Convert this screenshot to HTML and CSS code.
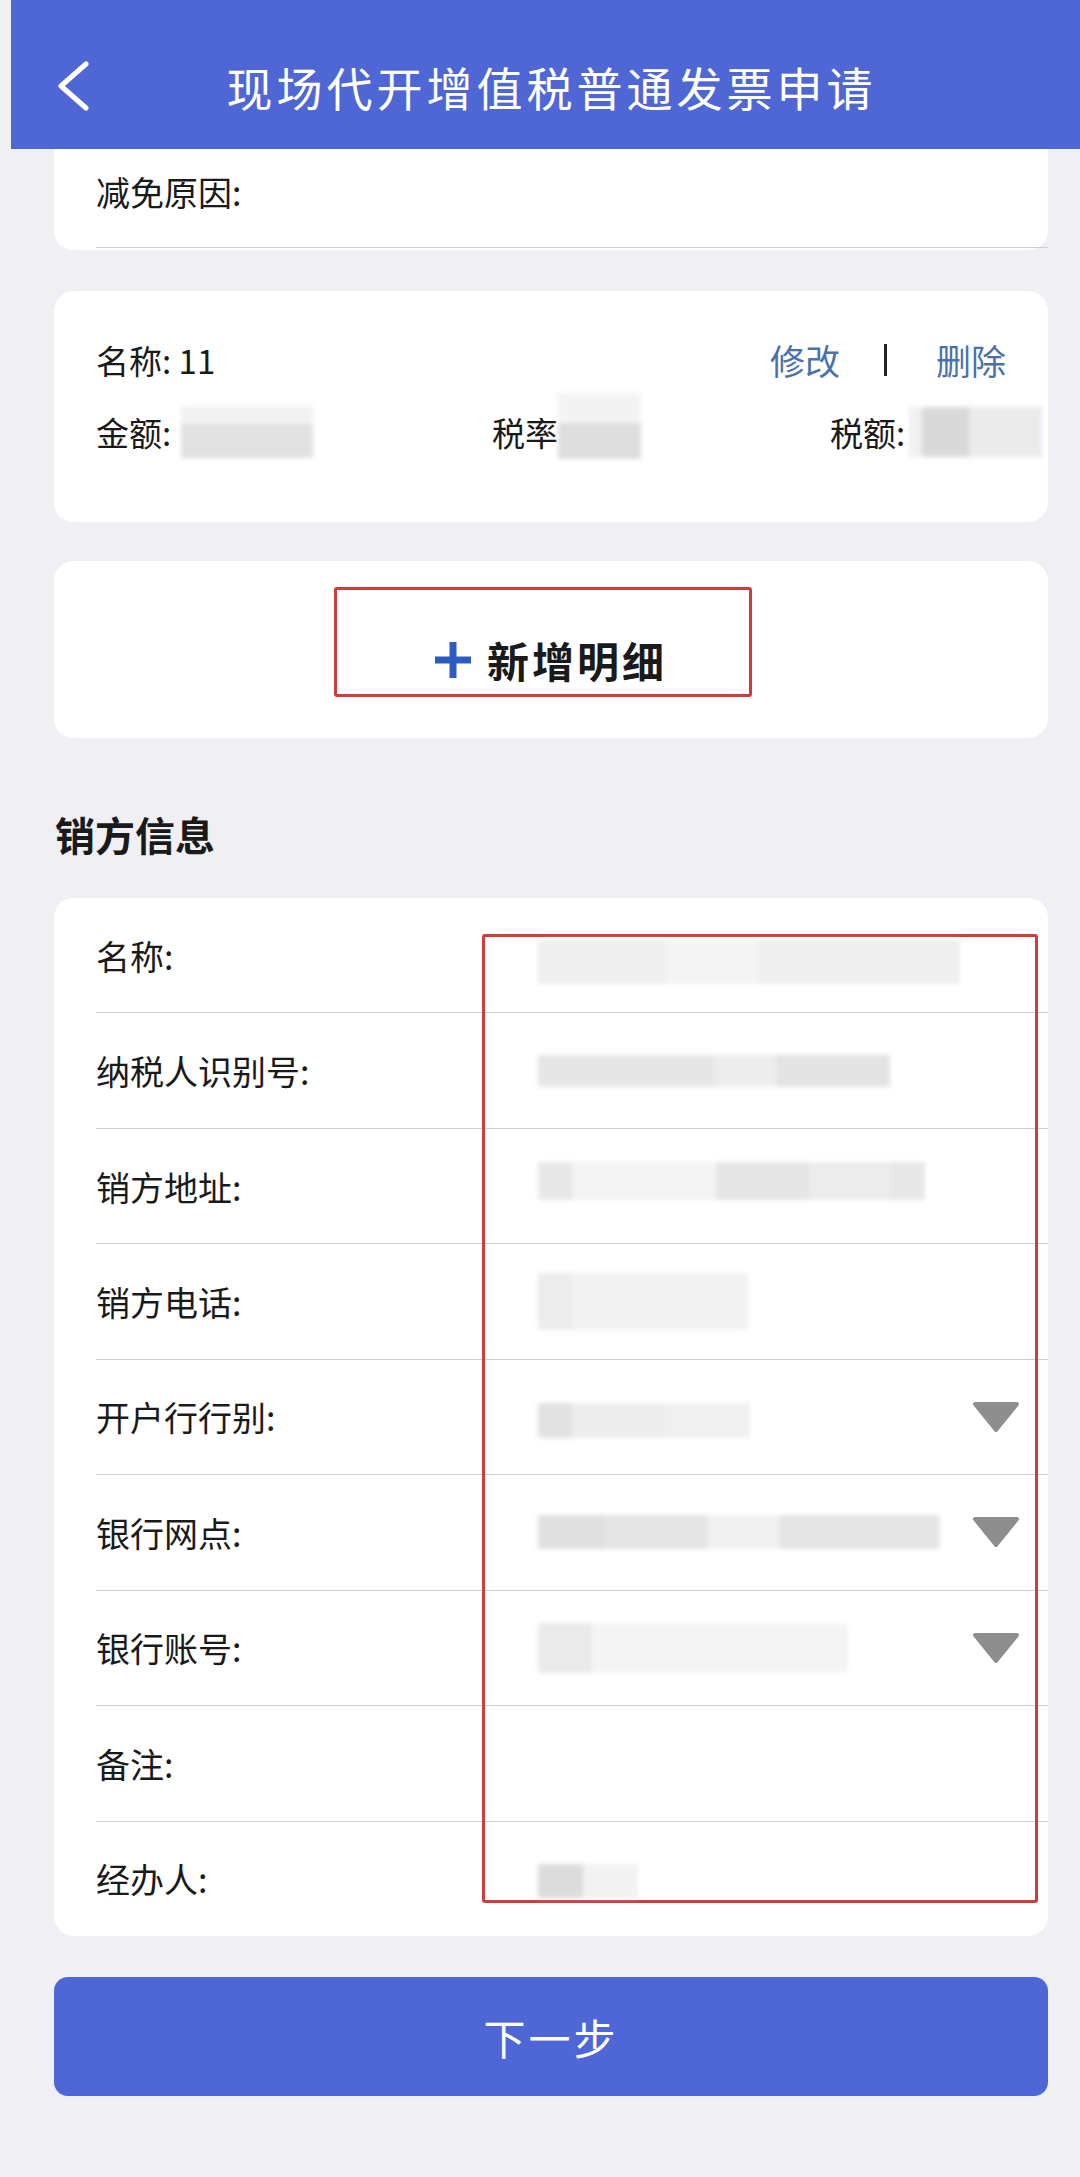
FILE: index.html
```html
<!DOCTYPE html>
<html>

<head>
    <meta charset="utf-8">
    <title>现场代开增值税普通发票申请</title>
    <link rel="stylesheet" href="styles.css">
</head>

<body>
    <div class="page">
        <div class="top-bar">
            <span class="back">
                <svg width="34" height="50" viewBox="0 0 34 50">
                    <polyline points="30,3 5,25 30,47" fill="none" stroke="#ffffff" stroke-width="5"
                        stroke-linecap="round" stroke-linejoin="round" />
                </svg>
            </span>
            <h1>现场代开增值税普通发票申请</h1>
            <span></span>
        </div>

        <!-- tail of the previous card, scrolled under the header -->
        <div class="card card-cut">
            <div class="reason-row">减免原因:</div>
        </div>

        <div class="card item-card">
            <div class="item-head">
                <span>名称: 11</span>
                <div class="actions">
                    <span class="action">修改</span>
                    <span class="divider"></span>
                    <span class="action">删除</span>
                </div>
            </div>
            <div class="item-values">
                <div class="cell">金额: <span class="mosaic m-amount"></span></div>
                <div class="cell">税率<span class="mosaic m-rate"></span></div>
                <div class="cell">税额: <span class="mosaic m-tax"></span></div>
            </div>
        </div>

        <div class="card add-card">
            <div class="mark mark-add"></div>
            <div class="add-btn">
                <svg width="36" height="36" viewBox="0 0 36 36">
                    <rect x="14.5" y="0" width="7" height="36" fill="#2d5cc0" />
                    <rect x="0" y="14.5" width="36" height="7" fill="#2d5cc0" />
                </svg>
                <span>新增明细</span>
            </div>
        </div>

        <h2 class="section-title">销方信息</h2>

        <div class="card seller-card">
            <div class="mark mark-seller"></div>
            <div class="field-row">
                <span class="field-label">名称:</span>
                <span class="mosaic m-name"></span>
            </div>
            <div class="field-row">
                <span class="field-label">纳税人识别号:</span>
                <span class="mosaic m-taxid"></span>
            </div>
            <div class="field-row">
                <span class="field-label">销方地址:</span>
                <span class="mosaic m-addr"></span>
            </div>
            <div class="field-row">
                <span class="field-label">销方电话:</span>
                <span class="mosaic m-phone"></span>
            </div>
            <div class="field-row">
                <span class="field-label">开户行行别:</span>
                <span class="mosaic m-bank-type"></span>
                <svg class="arrow" width="48" height="32" viewBox="0 0 48 32">
                    <polygon points="3,3 45,3 24,29" fill="#8e8e8e" stroke="#8e8e8e" stroke-width="4"
                        stroke-linejoin="round" />
                </svg>
            </div>
            <div class="field-row">
                <span class="field-label">银行网点:</span>
                <span class="mosaic m-branch"></span>
                <svg class="arrow" width="48" height="32" viewBox="0 0 48 32">
                    <polygon points="3,3 45,3 24,29" fill="#8e8e8e" stroke="#8e8e8e" stroke-width="4"
                        stroke-linejoin="round" />
                </svg>
            </div>
            <div class="field-row">
                <span class="field-label">银行账号:</span>
                <span class="mosaic m-account"></span>
                <svg class="arrow" width="48" height="32" viewBox="0 0 48 32">
                    <polygon points="3,3 45,3 24,29" fill="#8e8e8e" stroke="#8e8e8e" stroke-width="4"
                        stroke-linejoin="round" />
                </svg>
            </div>
            <div class="field-row">
                <span class="field-label">备注:</span>
            </div>
            <div class="field-row">
                <span class="field-label">经办人:</span>
                <span class="mosaic m-agent"></span>
            </div>
        </div>

        <div class="next-btn">下一步</div>
    </div>
</body>

</html>
```

FILE: styles.css
```css
body {
    font-family: "Noto Sans CJK SC", "Noto Sans", sans-serif;
    margin: 0;
    padding: 0;
    background: #efeff4;
    color: #1a1a1a;
}

.page {
    padding-left: 11px;
    height: 2177px;
    box-sizing: border-box;
    overflow: hidden;
}

.top-bar {
    background: #4f67d5;
    height: 149px;
    padding-top: 22px;
    box-sizing: border-box;
    display: grid;
    grid-template-columns: 1fr auto 1fr;
    align-items: center;
}

.back {
    padding-left: 45px;
    display: flex;
}

.top-bar h1 {
    margin: 0 0 0 12px;
    color: #ffffff;
    font-size: 46px;
    font-weight: normal;
    line-height: 1;
    letter-spacing: 4px;
}

.card {
    background: #ffffff;
    margin: 0 32px 0 43px;
    border-radius: 20px;
}

.card-cut {
    border-radius: 0 0 20px 20px;
    padding-bottom: 2px;
}

.reason-row {
    margin-left: 42px;
    height: 99px;
    box-sizing: border-box;
    padding-top: 26px;
    font-size: 34px;
    line-height: 34px;
    border-bottom: 1px solid #cfcfcf;
}

.item-card {
    margin-top: 41px;
    height: 231px;
    padding: 52px 42px 0 42px;
    box-sizing: border-box;
    font-size: 33px;
    line-height: 34px;
}

.item-head {
    display: flex;
    justify-content: space-between;
    align-items: center;
}

.actions {
    display: flex;
    align-items: center;
    font-size: 35px;
}

.action {
    color: #4a71ab;
}

.divider {
    width: 3px;
    height: 32px;
    margin: 0 49px 0 44px;
    background: #222222;
}

.item-values {
    margin-top: 38px;
    height: 34px;
    display: grid;
    grid-template-columns: 396px 338px 1fr;
    align-items: center;
}

.cell {
    height: 34px;
    display: flex;
    align-items: center;
    white-space: nowrap;
}

.mosaic {
    display: block;
    flex-shrink: 0;
    background: #ebebeb;
    filter: blur(2px);
}

.m-amount {
    width: 132px;
    height: 52px;
    margin-left: 10px;
    background: linear-gradient(to bottom, #f2f2f2 0 35%, #e1e1e1 35%);
}

.m-rate {
    width: 83px;
    height: 66px;
    margin-top: -12px;
    background: linear-gradient(to bottom, #f3f3f3 0 45%, #dedede 45%);
}

.m-tax {
    width: 133px;
    height: 50px;
    margin-left: 4px;
    background: linear-gradient(to right, #f0f0f0 0 10%, #d9d9d9 10% 45%, #ebebeb 45%);
}

.add-card {
    margin-top: 39px;
    height: 177px;
    padding-top: 20px;
    box-sizing: border-box;
    position: relative;
    display: flex;
    justify-content: center;
    align-items: center;
}

.add-btn {
    display: flex;
    align-items: center;
    gap: 16px;
    font-size: 42px;
    font-weight: bold;
    letter-spacing: 3px;
}

.mark {
    position: absolute;
    border: 3px solid #d23b3b;
    border-radius: 3px;
    box-sizing: border-box;
}

.mark-add {
    left: 280px;
    top: 26px;
    width: 418px;
    height: 110px;
}

.section-title {
    margin: 70px 0 38px 44px;
    font-size: 40px;
    line-height: 52px;
    font-weight: bold;
}

.seller-card {
    height: 1038px;
    position: relative;
    display: flex;
    flex-direction: column;
}

.field-row {
    flex: 1;
    margin-left: 42px;
    display: flex;
    align-items: center;
    border-bottom: 1px solid #d2d2d2;
    font-size: 34px;
}

.field-row:last-of-type {
    border-bottom: none;
}

.field-label {
    width: 442px;
    flex-shrink: 0;
}

.arrow {
    margin-left: auto;
    margin-right: 28px;
}

.m-name {
    width: 422px;
    height: 44px;
    margin-top: 14px;
    background: linear-gradient(to right, #eeeeee 0 30%, #f4f4f4 30% 52%, #efefef 52%);
}

.m-taxid {
    width: 352px;
    height: 32px;
    background: linear-gradient(to right, #e6e6e6 0 50%, #ededed 50% 68%, #e3e3e3 68%);
}

.m-addr {
    width: 387px;
    height: 38px;
    margin-top: -10px;
    background: linear-gradient(to right, #e8e8e8 0 9%, #f4f4f4 9% 46%, #e5e5e5 46% 70%, #ececec 70% 91%, #e8e8e8 91%);
}

.m-phone {
    width: 210px;
    height: 57px;
    background: linear-gradient(to right, #ececec 0 16%, #f2f2f2 16%);
}

.m-bank-type {
    width: 212px;
    height: 35px;
    margin-top: 8px;
    background: linear-gradient(to right, #e2e2e2 0 16%, #ededed 16% 60%, #f0f0f0 60%);
}

.m-branch {
    width: 402px;
    height: 34px;
    background: linear-gradient(to right, #e0e0e0 0 17%, #e5e5e5 17% 42%, #f0f0f0 42% 60%, #e6e6e6 60%);
}

.m-account {
    width: 310px;
    height: 50px;
    background: linear-gradient(to right, #eaeaea 0 17%, #f4f4f4 17%);
}

.m-agent {
    width: 100px;
    height: 34px;
    margin-top: 4px;
    background: linear-gradient(to right, #dcdcdc 0 45%, #f2f2f2 45%);
}

.mark-seller {
    left: 428px;
    top: 36px;
    width: 556px;
    height: 969px;
}

.next-btn {
    margin: 41px 32px 0 43px;
    height: 119px;
    background: #4f67d6;
    border-radius: 14px;
    color: #ffffff;
    font-size: 42px;
    letter-spacing: 3px;
    display: flex;
    justify-content: center;
    align-items: center;
}
```
